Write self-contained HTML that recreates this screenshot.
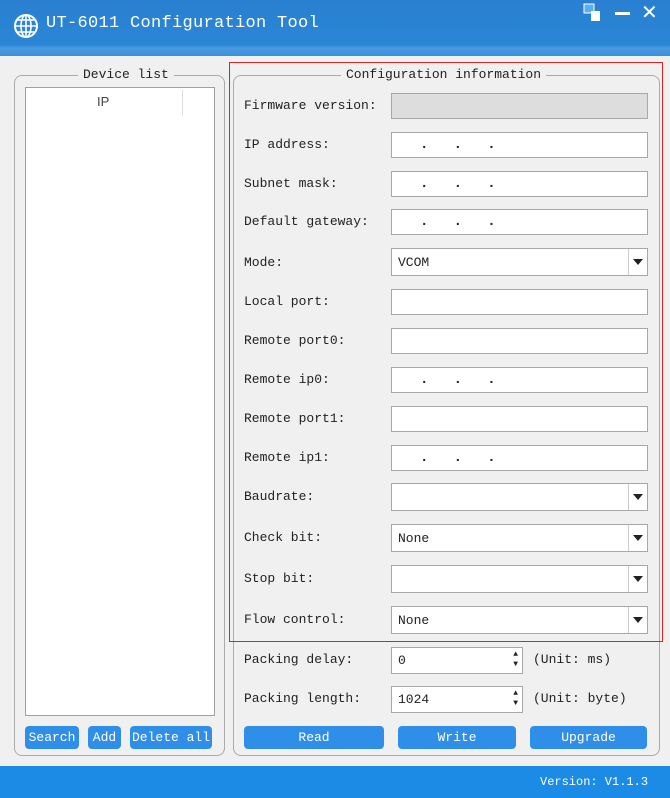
<!DOCTYPE html>
<html><head><meta charset="utf-8"><style>
*{margin:0;padding:0;box-sizing:border-box}
body{width:670px;height:798px;background:#f0f0f0;position:relative;overflow:hidden;font-family:"Liberation Mono","Noto Sans CJK SC",monospace;font-size:13px;color:#222}
.a{position:absolute}
.title{left:0;top:0;width:670px;height:56px;background:linear-gradient(#2a7fd0,#2b86d6 80%,#4a9be0 86%,#3a90dc)}
.tt{left:46px;top:14px;color:#fff;font-size:17px;letter-spacing:0.3px}
.grp{border:1px solid #aaa;border-radius:8px}
.leg{background:#f0f0f0;padding:0 5px;font-size:13px}
.in{left:391px;width:257px;height:26px;background:#fff;border:1px solid #a8a8a8}
.lb{left:244px}
.dots{font-size:14px;font-weight:bold;letter-spacing:0}
.dd{position:absolute;right:0;top:0;width:19px;height:100%;border-left:1px solid #ccc}
.dd:after{content:"";position:absolute;left:4px;top:10px;border-left:5px solid transparent;border-right:5px solid transparent;border-top:6px solid #222}
.btn{background:#2f8fe8;color:#fff;border-radius:4px;text-align:center;height:23px;line-height:23px;font-size:13px}
</style></head><body>
<div class="a title"></div>
<svg class="a" style="left:12px;top:12px" width="28" height="28" viewBox="0 0 28 28"><circle cx="14" cy="14" r="11" fill="none" stroke="#fff" stroke-width="2"/><ellipse cx="14" cy="14" rx="5" ry="11" fill="none" stroke="#fff" stroke-width="1.6"/><path d="M3 14H25M5 8H23M5 20H23M14 3V25" stroke="#fff" stroke-width="1.6"/></svg>
<div class="a tt">UT-6011 Configuration Tool</div>
<svg class="a" style="left:583px;top:3px" width="20" height="20"><rect x="1" y="1" width="10" height="9" fill="#5ab0ee" stroke="#fff"/><rect x="8" y="8" width="9" height="10" fill="#fff"/></svg>
<div class="a" style="left:615px;top:12px;width:15px;height:3px;background:#fff"></div>
<div class="a" style="left:641px;top:0px;color:#fff;font-size:20px;font-family:'Liberation Sans'">✕</div>

<div class="a grp" style="left:14px;top:75px;width:211px;height:681px"></div>
<div class="a leg" style="left:78px;top:67px">Device list</div>
<div class="a" style="left:25px;top:87px;width:190px;height:629px;background:#fff;border:1px solid #a0a0a0"></div>
<div class="a" style="left:182px;top:90px;width:1px;height:26px;background:#ddd"></div>
<div class="a" style="left:97px;top:94px;font-family:'Liberation Sans';font-size:13px;color:#444">IP</div>
<div class="a btn" style="left:25px;top:726px;width:54px">Search</div>
<div class="a btn" style="left:88px;top:726px;width:33px">Add</div>
<div class="a btn" style="left:130px;top:726px;width:82px">Delete all</div>

<div class="a grp" style="left:233px;top:75px;width:427px;height:681px"></div>
<div class="a" style="left:229px;top:62px;width:434px;height:580px;border:1px solid #d22"></div>
<div class="a leg" style="left:341px;top:67px">Configuration information</div>

<div class="a lb" style="top:98px">Firmware version:</div>
<div class="a in" style="top:93px;background:#ddd"></div>
<div class="a lb" style="top:137px">IP address:</div>
<div class="a in dots" style="top:132px"><span class="a" style="left:28px;top:4px">.&nbsp;&nbsp;&nbsp;.&nbsp;&nbsp;&nbsp;.</span></div>
<div class="a lb" style="top:176px">Subnet mask:</div>
<div class="a in dots" style="top:171px"><span class="a" style="left:28px;top:4px">.&nbsp;&nbsp;&nbsp;.&nbsp;&nbsp;&nbsp;.</span></div>
<div class="a lb" style="top:214px">Default gateway:</div>
<div class="a in dots" style="top:209px"><span class="a" style="left:28px;top:4px">.&nbsp;&nbsp;&nbsp;.&nbsp;&nbsp;&nbsp;.</span></div>
<div class="a lb" style="top:255px">Mode:</div>
<div class="a in" style="top:248px;height:28px"><span class="a" style="left:6px;top:6px">VCOM</span><div class="dd"></div></div>
<div class="a lb" style="top:294px">Local port:</div>
<div class="a in" style="top:289px"></div>
<div class="a lb" style="top:333px">Remote port0:</div>
<div class="a in" style="top:328px"></div>
<div class="a lb" style="top:372px">Remote ip0:</div>
<div class="a in dots" style="top:367px"><span class="a" style="left:28px;top:4px">.&nbsp;&nbsp;&nbsp;.&nbsp;&nbsp;&nbsp;.</span></div>
<div class="a lb" style="top:411px">Remote port1:</div>
<div class="a in" style="top:406px"></div>
<div class="a lb" style="top:450px">Remote ip1:</div>
<div class="a in dots" style="top:445px"><span class="a" style="left:28px;top:4px">.&nbsp;&nbsp;&nbsp;.&nbsp;&nbsp;&nbsp;.</span></div>
<div class="a lb" style="top:489px">Baudrate:</div>
<div class="a in" style="top:483px;height:28px"><div class="dd"></div></div>
<div class="a lb" style="top:530px">Check bit:</div>
<div class="a in" style="top:524px;height:28px"><span class="a" style="left:6px;top:6px">None</span><div class="dd"></div></div>
<div class="a lb" style="top:571px">Stop bit:</div>
<div class="a in" style="top:565px;height:28px"><div class="dd"></div></div>
<div class="a lb" style="top:612px">Flow control:</div>
<div class="a in" style="top:606px;height:28px"><span class="a" style="left:6px;top:6px">None</span><div class="dd"></div></div>

<div class="a lb" style="top:652px">Packing delay:</div>
<div class="a in" style="top:647px;width:132px;height:27px"><span class="a" style="left:6px;top:5px">0</span><span class="a" style="right:4px;top:2px;font-size:8px;line-height:10px">▲<br>▼</span></div>
<div class="a" style="left:533px;top:652px">(Unit: ms)</div>
<div class="a lb" style="top:691px">Packing length:</div>
<div class="a in" style="top:686px;width:132px;height:27px"><span class="a" style="left:6px;top:5px">1024</span><span class="a" style="right:4px;top:2px;font-size:8px;line-height:10px">▲<br>▼</span></div>
<div class="a" style="left:533px;top:691px">(Unit: byte)</div>

<div class="a btn" style="left:244px;top:726px;width:140px">Read</div>
<div class="a btn" style="left:398px;top:726px;width:118px">Write</div>
<div class="a btn" style="left:530px;top:726px;width:117px">Upgrade</div>

<div class="a" style="left:0;top:766px;width:670px;height:32px;background:#1c8be6"></div>
<div class="a" style="left:540px;top:775px;color:#fff;font-size:12px">Version: V1.1.3</div>
</body></html>
